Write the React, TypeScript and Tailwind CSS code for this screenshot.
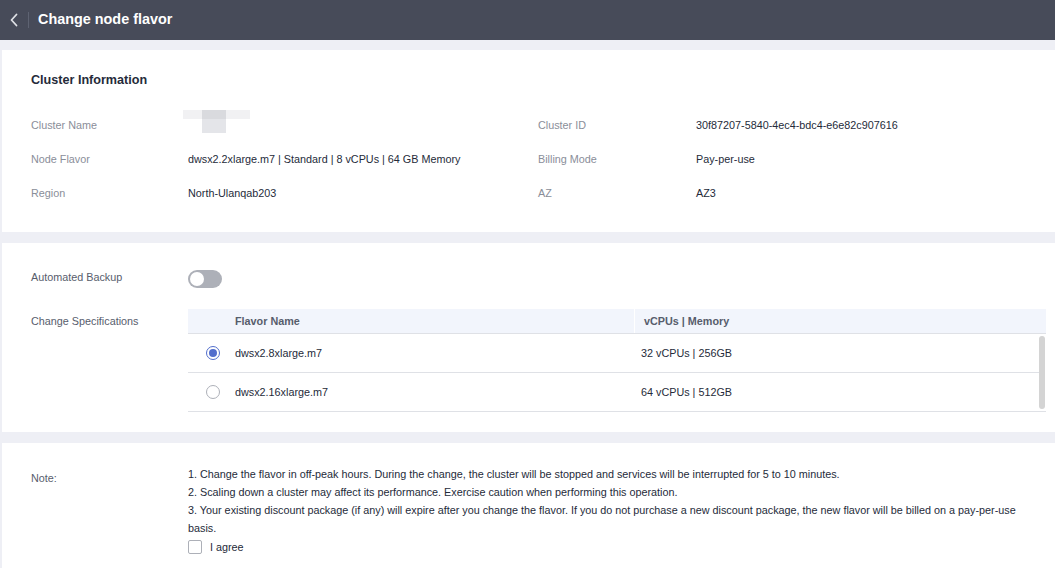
import React from "react";

const Row = ({ l1, v1, l2, v2 }: { l1: string; v1: React.ReactNode; l2: string; v2: string }) => (
  <div className="flex h-[34px] items-center">
    <div className="w-[157px] text-[#8a8e99]">{l1}</div>
    <div className="w-[350px] text-[#252b3a]">{v1}</div>
    <div className="w-[158px] text-[#8a8e99]">{l2}</div>
    <div className="text-[#252b3a]">{v2}</div>
  </div>
);

export default function App() {
  return (
    <div
      className="w-[1055px] h-[568px] overflow-hidden bg-[#eeeff5] text-[10.8px]"
      style={{ fontFamily: '"Liberation Sans", Arial, sans-serif' }}
    >
      <div className="h-[40px] bg-[#474b59] flex items-center">
        <div className="w-[28px] flex justify-center">
          <svg width="10" height="14" viewBox="0 0 10 14" fill="none">
            <path d="M7.5 1.5L2.5 7l5 5.5" stroke="#dfe1e6" strokeWidth="1.8" strokeLinecap="round" strokeLinejoin="round" />
          </svg>
        </div>
        <div className="w-px h-[16px] bg-[#5e6372]" />
        <div className="ml-[9px] text-white font-bold text-[14.4px]">Change node flavor</div>
      </div>

      <div className="ml-[2px] mt-[10px] flex flex-col gap-[11px]">
        <div className="bg-white h-[182px] pl-[29px] pt-[22px]">
          <div className="text-[12.6px] font-bold text-[#252b3a] leading-[16px] h-[16px]">Cluster Information</div>
          <div className="mt-[20px]">
            <Row
              l1="Cluster Name"
              v1={
                <div className="relative h-[23px] w-[70px]">
                  <div className="absolute left-[-5px] top-[-4px] w-[67px] h-[9px] bg-[#f1f1f3]" />
                  <div className="absolute left-[14px] top-[-4px] w-[24px] h-[23px] bg-[#e4e5e9]" />
                  <div className="absolute left-[14px] top-[-4px] w-[24px] h-[9px] bg-[#d9dade]" />
                </div>
              }
              l2="Cluster ID"
              v2="30f87207-5840-4ec4-bdc4-e6e82c907616"
            />
            <Row
              l1="Node Flavor"
              v1="dwsx2.2xlarge.m7 | Standard | 8 vCPUs | 64 GB Memory"
              l2="Billing Mode"
              v2="Pay-per-use"
            />
            <Row l1="Region" v1="North-Ulanqab203" l2="AZ" v2="AZ3" />
          </div>
        </div>

        <div className="bg-white h-[189px] pl-[29px] pt-[24px]">
          <div className="flex items-center h-[22px]">
            <div className="w-[157px] text-[#575d6c] -mt-[2px]">Automated Backup</div>
            <div className="relative w-[34px] h-[18px] rounded-full bg-[#adb0b8] mt-[2px]">
              <div className="absolute left-[2px] top-[2px] w-[14px] h-[14px] rounded-full bg-white" />
            </div>
          </div>
          <div className="flex mt-[20px]">
            <div className="w-[157px] text-[#575d6c] pt-[4px]">Change Specifications</div>
            <div className="w-[858px] relative">
              <div className="flex h-[25px] items-center bg-[#f2f5fc] border-b border-[#dfe1e6] font-bold text-[#575d6c]">
                <div className="w-[447px] pl-[47px] border-r border-white h-full flex items-center">Flavor Name</div>
                <div className="pl-[9px]">vCPUs | Memory</div>
              </div>
              <div className="pr-[6px] border-b border-[#dfe1e6]">
                <div className="flex h-[39px] items-center border-b border-[#dfe1e6] text-[#252b3a]">
                  <div className="w-[47px] flex justify-center pl-[2px]">
                    <div className="w-[14px] h-[14px] rounded-full border border-[#526ecc] flex items-center justify-center">
                      <div className="w-[8px] h-[8px] rounded-full bg-[#526ecc]" />
                    </div>
                  </div>
                  <div className="w-[406px]">dwsx2.8xlarge.m7</div>
                  <div>32 vCPUs | 256GB</div>
                </div>
                <div className="flex h-[38px] items-center text-[#252b3a]">
                  <div className="w-[47px] flex justify-center pl-[2px]">
                    <div className="w-[14px] h-[14px] rounded-full border border-[#adb0b8] bg-white" />
                  </div>
                  <div className="w-[406px]">dwsx2.16xlarge.m7</div>
                  <div>64 vCPUs | 512GB</div>
                </div>
              </div>
              <div className="absolute right-[1px] top-[27px] w-[6px] h-[73px] rounded-full bg-[#d4d4d4]" />
            </div>
          </div>
        </div>

        <div className="bg-white h-[130px] pl-[29px] pt-[22px] flex">
          <div className="w-[157px] text-[#575d6c] pt-[5px]">Note:</div>
          <div className="text-[#252b3a] leading-[18px] w-[835px]">
            <div>1. Change the flavor in off-peak hours. During the change, the cluster will be stopped and services will be interrupted for 5 to 10 minutes.</div>
            <div>2. Scaling down a cluster may affect its performance. Exercise caution when performing this operation.</div>
            <div>3. Your existing discount package (if any) will expire after you change the flavor. If you do not purchase a new discount package, the new flavor will be billed on a pay-per-use basis.</div>
            <div className="flex items-center mt-[1px]">
              <div className="w-[14px] h-[14px] rounded-[2px] border border-[#adb0b8] bg-white" />
              <span className="ml-[8px]">I agree</span>
            </div>
          </div>
        </div>
      </div>
    </div>
  );
}
